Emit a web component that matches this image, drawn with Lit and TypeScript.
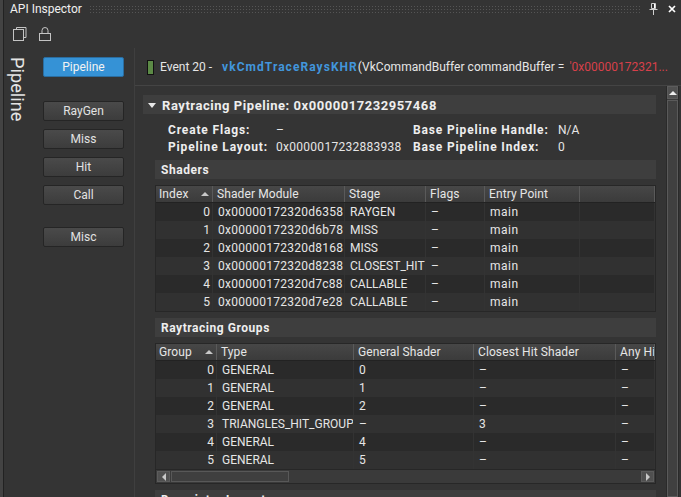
import {LitElement, html, css, svg} from 'lit';
import {customElement} from 'lit/decorators.js';

const SHADERS = [
  ['0', '0x00000172320d6358', 'RAYGEN', '–', 'main', ''],
  ['1', '0x00000172320d6b78', 'MISS', '–', 'main', ''],
  ['2', '0x00000172320d8168', 'MISS', '–', 'main', ''],
  ['3', '0x00000172320d8238', 'CLOSEST_HIT', '–', 'main', ''],
  ['4', '0x00000172320d7c88', 'CALLABLE', '–', 'main', ''],
  ['5', '0x00000172320d7e28', 'CALLABLE', '–', 'main', ''],
];

const GROUPS = [
  ['0', 'GENERAL', '0', '–', '–'],
  ['1', 'GENERAL', '1', '–', '–'],
  ['2', 'GENERAL', '2', '–', '–'],
  ['3', 'TRIANGLES_HIT_GROUP', '–', '3', '–'],
  ['4', 'GENERAL', '4', '–', '–'],
  ['5', 'GENERAL', '5', '–', '–'],
];

const copyIcon = svg`<svg width="14" height="14" viewBox="0 0 14 14" fill="none" stroke="#c4c4c4" stroke-width="1">
  <path d="M3.5 2.5V.5h9.5v10h-2"/><rect x=".5" y="2.5" width="10" height="11"/></svg>`;
const lockIcon = svg`<svg width="12" height="14" viewBox="0 0 12 14" fill="none" stroke="#c4c4c4" stroke-width="1">
  <path d="M3 6V3.5a3 3 0 0 1 6 0V6"/><rect x=".5" y="6.5" width="11" height="7"/></svg>`;
const pinIcon = svg`<svg width="9" height="12" viewBox="0 0 9 12" fill="none" stroke="#d0d0d0" stroke-width="1">
  <path d="M2.5.5h4v5h-4zM.5 6.5h8M4.5 7v5"/><path d="M5.5 1v4" stroke="#fff"/></svg>`;
const closeIcon = svg`<svg width="8" height="8" viewBox="0 0 8 8" stroke="#fff" stroke-width="1.7"><path d="M1 1l6 6M7 1L1 7"/></svg>`;

@customElement('app-root')
export class AppRoot extends LitElement {
  static styles = css`
    :host {
      display: block;
      width: 681px;
      height: 497px;
      overflow: hidden;
      background: #434343;
      color: #e6e6e6;
      font: 12px Roboto, "Liberation Sans", sans-serif;
    }
    .window {
      height: 497px;
      margin-left: 3px;
      border-left: 1px solid #222;
      padding-left: 1px;
      background: #343434;
      display: flex;
      flex-direction: column;
      overflow: hidden;
    }
    .title {
      height: 18px;
      flex: none;
      display: flex;
      align-items: center;
      padding: 0 0 0 5px;
      gap: 7px;
      font-size: 12px;
      color: #f0f0f0;
    }
    .grip {
      flex: 1;
      height: 8px;
      margin-right: 4px;
      background-image: radial-gradient(#555 0.7px, transparent 0.8px);
      background-size: 3px 3px;
    }
    .title-actions {
      width: 37px;
      display: flex;
      align-items: center;
      gap: 10px;
      padding-left: 5px;
      box-sizing: border-box;
      margin-left: -7px;
    }
    .title-actions svg { display: block; }
    .toolbar {
      height: 30px;
      flex: none;
      box-sizing: border-box;
      display: flex;
      align-items: center;
      gap: 12px;
      padding: 2px 0 0 8px;
    }
    .toolbar svg { display: block; }
    .body {
      flex: 1;
      display: flex;
      min-height: 0;
    }
    .side-label {
      width: 38px;
      flex: none;
      box-sizing: border-box;
      padding: 9px 15px 0 0;
      writing-mode: vertical-rl;
      font-size: 18px;
      letter-spacing: 0.1px;
      color: #e4e4e4;
    }
    .nav {
      width: 92px;
      flex: none;
      display: flex;
      flex-direction: column;
      box-sizing: border-box;
      padding-top: 9px;
      border-right: 1px solid #3f3f3f;
    }
    .btn {
      width: 81px;
      height: 20px;
      box-sizing: border-box;
      display: flex;
      align-items: center;
      justify-content: center;
      border: 1px solid #252525;
      border-radius: 2px;
      background: linear-gradient(#4a4a4a, #3c3c3c);
      color: #e2e2e2;
      margin-bottom: 8px;
    }
    .btn.active {
      background: #3592d6;
      border-color: #2a6da0;
      color: #f2f2f2;
      margin-bottom: 24px;
    }
    .btn.gap { margin-top: 14px; }
    .content {
      flex: 1;
      min-width: 0;
      display: flex;
      flex-direction: column;
    }
    .event {
      height: 38px;
      flex: none;
      box-sizing: border-box;
      border-bottom: 1px solid #444;
      display: flex;
      align-items: center;
      padding: 1px 0 0 12px;
      white-space: nowrap;
      font-size: 12px;
    }
    .marker {
      width: 7px;
      height: 15px;
      box-sizing: border-box;
      background: #5c8a46;
      border: 1px solid #111;
      margin-right: 6px;
      flex: none;
    }
    .fn {
      margin-left: 10px;
      color: #4296dc;
      font-weight: 700;
      letter-spacing: 1.05px;
    }
    .args { letter-spacing: 0.03px; }
    .ptr { color: #d8404a; margin-left: 5px; }
    .scroller {
      flex: 1;
      min-height: 0;
      display: flex;
    }
    .inner {
      flex: 1;
      min-width: 0;
      box-sizing: border-box;
      padding: 9px 10px 0 8px;
      overflow: hidden;
    }
    .vbar {
      width: 13px;
      margin-right: 2px;
      flex: none;
      box-sizing: border-box;
      display: flex;
      flex-direction: column;
      background: #3a3a3a;
      border-right: 1px solid #2a2a2a;
      border-left: 1px solid #2a2a2a;
    }
    .vbar .up {
      height: 13px;
      background: #505050;
      border: 1px solid #5c5c5c;
      box-sizing: border-box;
      display: flex;
      align-items: center;
      justify-content: center;
    }
    .vbar .thumb {
      flex: 1;
      margin-top: 1px;
      background: #404040;
      border: 1px solid #5a5a5a;
    }
    .tri-up {
      width: 0; height: 0;
      border-left: 4px solid transparent;
      border-right: 4px solid transparent;
      border-bottom: 4px solid #c8c8c8;
    }
    .vbar .tri-up { border-bottom-color: #eee; }
    .section {
      height: 19px;
      background: #3e3e3e;
      display: flex;
      align-items: center;
      gap: 6px;
      padding-left: 4px;
      font-weight: 700;
      letter-spacing: 0.55px;
      color: #eeeeee;
    }
    .section.top { font-size: 13px; letter-spacing: 0.55px; padding-top: 1px; box-sizing: border-box; }
    .tri-down {
      width: 0; height: 0;
      border-left: 4px solid transparent;
      border-right: 4px solid transparent;
      border-top: 5px solid #e8e8e8;
      margin-left: 1px;
    }
    .props {
      display: grid;
      grid-template-columns: 108px 137px 145px 1fr;
      grid-auto-rows: 17px;
      align-items: center;
      padding: 7px 0 0 25px;
      height: 46px;
      box-sizing: border-box;
    }
    .props .k { font-weight: 700; letter-spacing: 0.85px; color: #eee; }
    .props .hex { letter-spacing: 0.28px; }
    .sub { margin-left: 12px; }
    .sub .section { padding-left: 6px; }
    .sub.gap { margin-top: 6px; }
    .table {
      margin-top: 6px;
      background: #2e2e2e;
      border: 1px solid #272727;
    }
    .row {
      display: grid;
      height: 18px;
      align-items: center;
    }
    .row > div {
      white-space: nowrap;
      overflow: hidden;
      padding-left: 5px;
      height: 100%;
      display: flex;
      align-items: center;
      box-sizing: border-box;
      border-right: 1px solid #333;
    }
    .row > div.num { justify-content: flex-end; padding: 0 2px 0 0; }
    .row > div.hex { letter-spacing: 0.25px; }
    .row > div.word { letter-spacing: 0.5px; }
    .row:nth-child(even) { background: #2a2a2a; }
    .row:nth-child(odd) { background: #313131; }
    .row.head {
      height: 17px;
      background: linear-gradient(#474747, #3b3b3b);
      border-bottom: 1px solid #222;
      box-sizing: border-box;
    }
    .row.head > div {
      padding-left: 4px;
      letter-spacing: 0.1px;
      border-right: 1px solid #5a5a5a;
      justify-content: flex-start;
    }
    .row.head > div.sort { justify-content: space-between; padding: 0 3px 0 3px; }
    .shaders .row { grid-template-columns: 57px 132px 81px 59px 95px 1fr; }
    .groups .row { grid-template-columns: 61px 137px 120px 142px 1fr; }
    .hbar {
      height: 14px;
      background: #3a3a3a;
      display: flex;
      align-items: stretch;
      border-top: 1px solid #272727;
      box-sizing: border-box;
    }
    .hbar .end {
      width: 13px;
      background: #505050;
      border: 1px solid #5c5c5c;
      margin: 1px;
      box-sizing: border-box;
      display: flex;
      align-items: center;
      justify-content: center;
    }
    .hbar .thumb {
      width: 116px;
      border: 1px solid #585858;
      background: #3f3f3f;
      margin: 1px 0;
    }
    .hbar .fill { flex: 1; }
    .tri-left, .tri-right {
      width: 0; height: 0;
      border-top: 4px solid transparent;
      border-bottom: 4px solid transparent;
    }
    .tri-left { border-right: 4px solid #c8c8c8; }
    .tri-right { border-left: 4px solid #c8c8c8; }
  `;

  private _cellClass(c: string, i: number) {
    if (i === 0) return 'num';
    if (c.startsWith('0x')) return 'hex';
    if (c === 'main') return 'word';
    return '';
  }

  private _table(cls: string, head: string[], rows: string[][]) {
    return html`
      <div class="table ${cls}">
        <div class="row head">
          ${head.map((h, i) => html`<div class=${i === 0 ? 'sort' : ''}>${h}${i === 0 ? html`<span class="tri-up"></span>` : ''}</div>`)}
        </div>
        ${rows.map(r => html`
          <div class="row">
            ${r.map((c, i) => html`<div class=${this._cellClass(c, i)}>${c}</div>`)}
          </div>`)}
        ${cls === 'groups' ? html`
          <div class="hbar">
            <div class="end"><span class="tri-left"></span></div>
            <div class="thumb"></div>
            <div class="fill"></div>
            <div class="end"><span class="tri-right"></span></div>
          </div>` : ''}
      </div>`;
  }

  render() {
    return html`
      <div class="window">
        <div class="title">
          <span>API Inspector</span>
          <div class="grip"></div>
          <div class="title-actions">${pinIcon}${closeIcon}</div>
        </div>
        <div class="toolbar">${copyIcon}${lockIcon}</div>
        <div class="body">
          <div class="side-label">Pipeline</div>
          <div class="nav">
            <div class="btn active">Pipeline</div>
            <div class="btn">RayGen</div>
            <div class="btn">Miss</div>
            <div class="btn">Hit</div>
            <div class="btn">Call</div>
            <div class="btn gap">Misc</div>
          </div>
          <div class="content">
            <div class="event">
              <span class="marker"></span>
              <span>Event 20 -</span>
              <span class="fn">vkCmdTraceRaysKHR</span>
              <span class="args">(VkCommandBuffer commandBuffer =</span>
              <span class="ptr">'0x00000172321...</span>
            </div>
            <div class="scroller">
              <div class="inner">
                <div class="section top"><span class="tri-down"></span>Raytracing Pipeline: 0x0000017232957468</div>
                <div class="props">
                  <span class="k">Create Flags:</span><span>–</span>
                  <span class="k">Base Pipeline Handle:</span><span>N/A</span>
                  <span class="k">Pipeline Layout:</span><span class="hex">0x0000017232883938</span>
                  <span class="k">Base Pipeline Index:</span><span>0</span>
                </div>
                <div class="sub">
                  <div class="section">Shaders</div>
                  ${this._table('shaders', ['Index', 'Shader Module', 'Stage', 'Flags', 'Entry Point', ''], SHADERS)}
                </div>
                <div class="sub gap">
                  <div class="section">Raytracing Groups</div>
                  ${this._table('groups', ['Group', 'Type', 'General Shader', 'Closest Hit Shader', 'Any Hit Shader'], GROUPS)}
                </div>
                <div class="sub gap">
                  <div class="section">Descriptor Layouts</div>
                </div>
              </div>
              <div class="vbar">
                <div class="up"><span class="tri-up"></span></div>
                <div class="thumb"></div>
              </div>
            </div>
          </div>
        </div>
      </div>
    `;
  }
}
